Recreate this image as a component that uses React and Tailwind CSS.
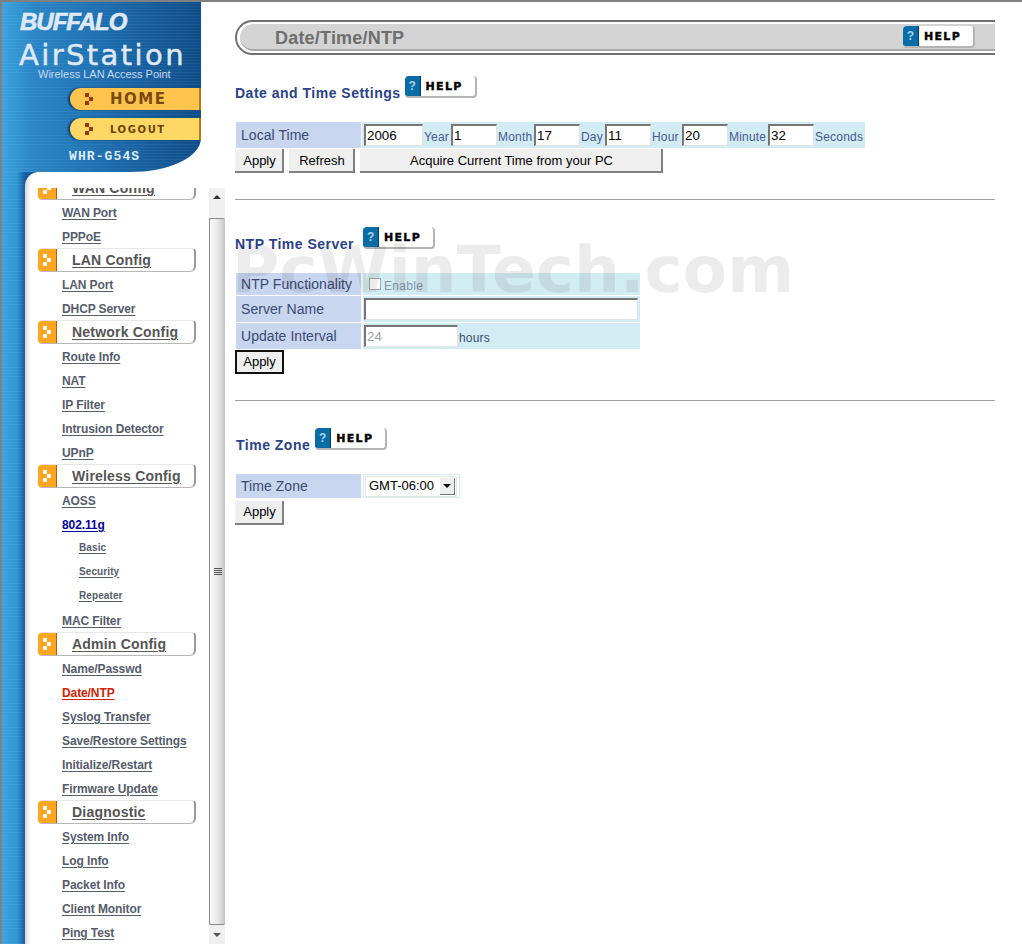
import React from 'react';

const SANS = 'font-["Liberation_Sans",Arial,sans-serif]';

const navItems = [
  { type: 'head', label: 'WAN Config' },
  { label: 'WAN Port' },
  { label: 'PPPoE' },
  { type: 'head', label: 'LAN Config' },
  { label: 'LAN Port' },
  { label: 'DHCP Server' },
  { type: 'head', label: 'Network Config' },
  { label: 'Route Info' },
  { label: 'NAT' },
  { label: 'IP Filter' },
  { label: 'Intrusion Detector' },
  { label: 'UPnP' },
  { type: 'head', label: 'Wireless Config' },
  { label: 'AOSS' },
  { label: '802.11g', tone: 'open' },
  { type: 'sub', label: 'Basic' },
  { type: 'sub', label: 'Security' },
  { type: 'sub', label: 'Repeater' },
  { label: 'MAC Filter' },
  { type: 'head', label: 'Admin Config' },
  { label: 'Name/Passwd' },
  { label: 'Date/NTP', tone: 'active' },
  { label: 'Syslog Transfer' },
  { label: 'Save/Restore Settings' },
  { label: 'Initialize/Restart' },
  { label: 'Firmware Update' },
  { type: 'head', label: 'Diagnostic' },
  { label: 'System Info' },
  { label: 'Log Info' },
  { label: 'Packet Info' },
  { label: 'Client Monitor' },
  { label: 'Ping Test' },
];

// the little three-pixel arrow used on the buttons and menu heads
const PixelArrow = ({ color }) => (
  <svg width="8" height="12" viewBox="0 0 8 12" className="shrink-0">
    <rect x="0" y="0" width="4" height="4" fill={color} />
    <rect x="4" y="4" width="4" height="4" fill={color} />
    <rect x="0" y="8" width="4" height="4" fill={color} />
  </svg>
);

const HelpButton = () => (
  <div className="flex h-[22px] w-[72px] shrink-0 overflow-hidden rounded-[4px] border-r-2 border-b-2 border-[#b4b4b4] bg-white">
    <div className={`flex w-[16px] items-center justify-center border-r border-[#0b3a5c] bg-[#0a6ca5] text-[12px] font-bold text-[#a9d3ea] ${SANS}`}>
      ?
    </div>
    <div className='flex flex-1 items-start pl-[5px] pt-[4px] font-["DejaVu_Sans",sans-serif] text-[11px] leading-[13px] font-bold tracking-[1.3px] text-black [-webkit-text-stroke:0.4px_black]'>
      HELP
    </div>
  </div>
);

const SectionTitle = ({ children, gap, indent = 0 }) => (
  <div className="flex h-[26px] items-start" style={{ paddingLeft: indent }}>
    <div className={`mt-[8px] text-[14px] leading-[18px] font-bold tracking-[0.5px] text-[#2a4288] ${SANS}`} style={{ marginRight: gap }}>
      {children}
    </div>
    <HelpButton />
  </div>
);

const Field = ({ value, className = '', disabled }) => (
  <input
    readOnly
    defaultValue={value}
    disabled={disabled}
    className={`h-[22px] border-t-2 border-l-2 border-r border-b border-t-[#767676] border-l-[#767676] border-r-[#e2e2e2] border-b-[#e2e2e2] bg-white pl-[1px] text-[13.33px] outline-none ${disabled ? 'text-[#a0a0a0]' : 'text-black'} ${className}`}
  />
);

const Unit = ({ children, className = '' }) => (
  <span className={`mt-[4px] text-[12px] leading-[20px] tracking-[0.2px] text-[#4a5a90] ${className}`}>{children}</span>
);

const Btn = ({ children, className = '' }) => (
  <button className={`h-[24px] border-r-2 border-b-2 border-[#808080] bg-[#efefef] pt-[1px] pl-[2px] text-[13px] leading-[20px] text-black ${className}`}>
    {children}
  </button>
);

const LabelCell = ({ children, className = 'h-[26px]' }) => (
  <div className={`flex w-[125px] shrink-0 items-center bg-[#c8d6f0] pl-[5px] text-[14px] tracking-[0.05px] text-[#3c4a70] ${className}`}>
    {children}
  </div>
);

const NavRow = ({ item }) => {
  if (item.type === 'head') {
    return (
      <div className="flex h-[24px] w-[158px] overflow-hidden rounded-[4px] rounded-br-[6px] border-t border-r-2 border-b border-t-[#e6e6e6] border-r-[#9a9a9a] border-b-[#b8b8b8] bg-white">
        <div className="flex w-[19px] shrink-0 items-center justify-center border-r border-[#a8650f] bg-[#ffa51f]">
          <PixelArrow color="#ffffff" />
        </div>
        <span className="ml-[15px] text-[14px] leading-[22px] font-bold tracking-[0.2px] text-[#555555] underline underline-offset-2">
          {item.label}
        </span>
      </div>
    );
  }
  if (item.type === 'sub') {
    return (
      <div className="flex h-[24px] items-center pb-[2px] pl-[41px] text-[10px] font-bold tracking-[0.1px] text-[#555c6b] underline underline-offset-2">
        {item.label}
      </div>
    );
  }
  const tone = item.tone === 'active' ? 'text-[#cc2200]' : item.tone === 'open' ? 'text-[#000099]' : 'text-[#555c6b]';
  return (
    <div className={`flex h-[24px] items-center pt-[1px] pl-[24px] text-[12px] font-bold tracking-[-0.1px] underline underline-offset-2 ${tone}`}>
      {item.label}
    </div>
  );
};

const Scrollbar = () => (
  <div className="flex h-full w-[16px] shrink-0 flex-col bg-[#f0f0f0]">
    <div className="flex h-[30px] shrink-0 items-start justify-center pt-[7px]">
      <div className="h-0 w-0 border-x-[4px] border-b-[4px] border-x-transparent border-b-[#333333]" />
    </div>
    <div className="flex flex-1 items-center justify-center rounded-[2px] border-t border-b border-l border-[#8a8a8a] bg-[linear-gradient(90deg,#fafafa,#e8e8e8_50%,#c4c4c4)]">
      <div className="flex w-[8px] flex-col gap-[1px]">
        <div className="h-[1px] bg-[#555555]" />
        <div className="h-[1px] bg-[#555555]" />
        <div className="h-[1px] bg-[#555555]" />
        <div className="h-[1px] bg-[#555555]" />
      </div>
    </div>
    <div className="flex h-[19px] shrink-0 items-center justify-center">
      <div className="h-0 w-0 border-x-[4px] border-t-[4px] border-x-transparent border-t-[#555555]" />
    </div>
  </div>
);

const Sidebar = () => (
  <div className="flex h-full w-[223px] shrink-0 flex-col">
    {/* Blue logo block */}
    <div className="h-[170px] w-[199px] shrink-0 rounded-br-[70px_34px] bg-[repeating-linear-gradient(0deg,rgba(255,255,255,0.05)_0,rgba(255,255,255,0.05)_1px,transparent_1px,transparent_3px),linear-gradient(90deg,#3ba3e0,#2a86c6_15%,#1c6aab_55%,#0f4c88)]">
      <div className="flex h-full flex-col">
        <div className="mt-[7px] ml-[18px] text-[24px] leading-[26px] font-bold tracking-[-1px] text-[#dfe9f5] italic [-webkit-text-stroke:0.6px_#dfe9f5]">BUFFALO</div>
        <div className='mt-[4px] ml-[17px] font-["DejaVu_Sans",sans-serif] text-[29px] leading-[32px] tracking-[2.4px] text-[#dfe9f5] [-webkit-text-stroke:0.5px_#dfe9f5]'>AirStation</div>
        <div className="-mt-[3px] ml-[36px] text-[11px] leading-[13px] text-[#c8daf0]">Wireless LAN Access Point</div>
        <div className="mt-[7px] flex h-[22px] w-[131px] items-center self-end rounded-l-full border-r-2 border-[#b07c10] bg-[#ffc44d] pl-[15px] shadow-[-2px_0_2px_#0b3f70]">
          <PixelArrow color="#9c3508" />
          <span className='ml-[17px] font-["DejaVu_Sans",sans-serif] text-[15px] font-bold tracking-[1.5px] text-[#7a4a10]'>HOME</span>
        </div>
        <div className="mt-[8px] flex h-[22px] w-[131px] items-center self-end rounded-l-full border-r-2 border-[#b07c10] bg-[#ffd764] pl-[15px] shadow-[-2px_0_2px_#0b3f70]">
          <PixelArrow color="#9c3508" />
          <span className='ml-[17px] font-["DejaVu_Sans",sans-serif] text-[10px] font-bold tracking-[1.6px] text-[#6a4208]'>LOGOUT</span>
        </div>
        <div className='mt-[9px] ml-[67px] font-["Liberation_Mono",monospace] text-[13px] leading-[16px] font-bold tracking-[1.1px] text-[#dcecfa]'>WHR-G54S</div>
      </div>
    </div>

    {/* Blue strip plus white menu panel */}
    <div className="flex min-h-0 flex-1 bg-[repeating-linear-gradient(0deg,rgba(255,255,255,0.05)_0,rgba(255,255,255,0.05)_1px,transparent_1px,transparent_3px),linear-gradient(90deg,#3ba3e0,#2f95d6_15px,#135a9b_23px,#135a9b_36px,#ffffff_36px)]">
      <div className="w-[23px] shrink-0" />
      <div className="flex min-h-0 flex-1 flex-col rounded-tl-[14px] bg-[linear-gradient(90deg,#d8d8d8,#ffffff_6px)]">
        <div className="h-[16px] shrink-0" />
        <div className="flex min-h-0 flex-1">
          <div className="min-w-0 flex-1 overflow-hidden pl-[13px]">
            <div className="-mt-[12px]">
              {navItems.map((item) => (
                <NavRow key={item.label} item={item} />
              ))}
            </div>
          </div>
          <Scrollbar />
        </div>
      </div>
    </div>
  </div>
);

const App = () => (
  <div className={`relative flex h-[944px] w-[1022px] overflow-hidden border-t-2 border-l-2 border-[#808080] bg-white ${SANS}`}>
    <Sidebar />

    <div className="ml-[10px] w-[760px] shrink-0">
      {/* Title bar */}
      <div className="mt-[18px] h-[35px] rounded-l-[18px] border-y-2 border-l-2 border-[#707070] bg-white py-[2px] pl-[3px]">
        <div className="flex h-[27px] items-center justify-between rounded-l-[14px] border-b-2 border-[#a8a8a8] bg-[#d4d4d4] pr-[20px] pl-[35px]">
          <span className="pt-[3px] text-[18px] font-bold tracking-[0.2px] text-[#6e6e6e]">Date/Time/NTP</span>
          <HelpButton />
        </div>
      </div>

      {/* Date and time */}
      <div className="mt-[21px]">
        <SectionTitle gap={4}>Date and Time Settings</SectionTitle>
      </div>
      <div className="mt-[20px] ml-[1px] flex h-[26px] w-[629px] gap-[1px] bg-white">
        <LabelCell>Local Time</LabelCell>
        <div className="flex flex-1 items-center bg-[#d2ecf3] pl-[2px]">
          <Field value="2006" className="w-[59px]" />
          <Unit className="ml-[1px] w-[27px]">Year</Unit>
          <Field value="1" className="w-[46px]" />
          <Unit className="ml-[1px] w-[36px]">Month</Unit>
          <Field value="17" className="w-[46px]" />
          <Unit className="ml-[1px] w-[24px]">Day</Unit>
          <Field value="11" className="w-[46px]" />
          <Unit className="ml-[1px] w-[30px]">Hour</Unit>
          <Field value="20" className="w-[46px]" />
          <Unit className="ml-[1px] w-[39px]">Minute</Unit>
          <Field value="32" className="w-[46px]" />
          <Unit className="ml-[1px]">Seconds</Unit>
        </div>
      </div>
      <div className="mt-[1px] flex gap-[5px]">
        <Btn className="w-[49px]">Apply</Btn>
        <Btn className="w-[66px]">Refresh</Btn>
        <Btn className="w-[303px]">Acquire Current Time from your PC</Btn>
      </div>
      <div className="mt-[26px] h-[1px] bg-[#a0a0a0]" />

      {/* NTP */}
      <div className="mt-[27px]">
        <SectionTitle gap={9}>NTP Time Server</SectionTitle>
      </div>
      <div className="mt-[20px] ml-[1px] flex w-[404px] flex-col gap-[1px]">
        <div className="flex gap-[2px]">
          <LabelCell className="h-[22px]">NTP Functionality</LabelCell>
          <div className="flex flex-1 items-center bg-[#d2ecf3] pl-[6px]">
            <input type="checkbox" disabled className="h-[12px] w-[12px] appearance-none border border-[#a8a8a8] bg-white" />
            <span className="mt-[3px] ml-[3px] text-[12px] tracking-[0.3px] text-[#8a93a8]">Enable</span>
          </div>
        </div>
        <div className="flex gap-[2px]">
          <LabelCell>Server Name</LabelCell>
          <div className="flex flex-1 items-center bg-[#d2ecf3] pr-[2px] pl-[1px]">
            <Field value="" className="w-full" />
          </div>
        </div>
        <div className="flex gap-[2px]">
          <LabelCell>Update Interval</LabelCell>
          <div className="flex flex-1 items-center bg-[#d2ecf3] pl-[1px]">
            <Field value="24" disabled className="w-[94px]" />
            <Unit className="ml-[1px] text-[#404a6e]">hours</Unit>
          </div>
        </div>
      </div>
      <div>
        <button className="h-[24px] w-[49px] border-2 border-[#111111] bg-[#efefef] text-[13px] leading-[18px] text-black">Apply</button>
      </div>
      <div className="mt-[26px] h-[1px] bg-[#a0a0a0]" />

      {/* Time zone */}
      <div className="mt-[27px]">
        <SectionTitle gap={5} indent={1}>Time Zone</SectionTitle>
      </div>
      <div className="mt-[20px] ml-[1px] flex h-[24px] w-[224px] gap-[2px]">
        <LabelCell className="h-[24px]">Time Zone</LabelCell>
        <div className="flex flex-1 items-center border border-[#d2ecf3] pl-[1px]">
          <div className="flex h-[21px] w-[92px] items-center justify-between border border-[#e4e4e4] bg-white pr-[1px] pl-[3px] text-[13px] text-black">
            GMT-06:00
            <div className="flex h-[17px] w-[15px] items-center justify-center border-r border-b border-[#777777] bg-[#efefef]">
              <div className="h-0 w-0 border-x-[4px] border-t-[4px] border-x-transparent border-t-black" />
            </div>
          </div>
        </div>
      </div>
      <div className="mt-[1px]">
        <Btn className="w-[49px]">Apply</Btn>
      </div>
    </div>

    {/* Watermark burned over the page */}
    <div className='pointer-events-none absolute top-[228px] left-[230px] font-["DejaVu_Sans",sans-serif] text-[64.5px] leading-[80px] font-bold whitespace-nowrap text-[rgba(0,0,0,0.075)]'>
      PcWinTech.com
    </div>
  </div>
);

export default App;
